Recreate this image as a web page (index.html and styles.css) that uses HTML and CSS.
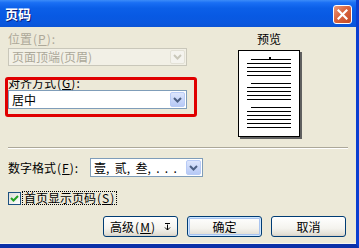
FILE: index.html
```html
<!DOCTYPE html>
<html lang="zh-CN">
<head>
    <meta charset="UTF-8">
    <title>页码</title>
    <link rel="stylesheet" href="styles.css">
</head>
<body>
    <div class="window">
        <div class="titlebar">
            <span class="title">页码</span>
            <span class="close">
                <svg width="11" height="11" viewBox="0 0 11 11"><path d="M1.5 1.5 L9.5 9.5 M9.5 1.5 L1.5 9.5" stroke="#fff" stroke-width="2.2" stroke-linecap="square"/></svg>
            </span>
        </div>
        <div class="content">
            <div class="top">
                <div class="settings">
                    <div class="label disabled">位置<span class="key">(<u>P</u>):</span></div>
                    <div class="combo is-disabled">
                        <span class="value">页面顶端(页眉)</span>
                        <span class="drop"><svg width="9" height="6" viewBox="0 0 9 6"><path d="M1 1 L4.5 4.5 L8 1" fill="none" stroke="currentColor" stroke-width="2"/></svg></span>
                    </div>
                    <div class="group">
                        <div class="label">对齐方式<span class="key">(<u>G</u>):</span></div>
                        <div class="combo tall">
                            <span class="value">居中</span>
                            <span class="drop"><svg width="9" height="6" viewBox="0 0 9 6"><path d="M1 1 L4.5 4.5 L8 1" fill="none" stroke="currentColor" stroke-width="2"/></svg></span>
                        </div>
                        <div class="mark"></div>
                    </div>
                </div>
                <div class="preview">
                    <div class="preview-title">预览</div>
                    <div class="page">
                        <svg width="60" height="85" viewBox="0 0 60 85" shape-rendering="crispEdges">
                            <rect x="30" y="6" width="2" height="2" fill="#000"/>
                            <g stroke="#000" stroke-width="1">
                                <path d="M12 8.5H52 M8 12.5H52 M8 16.5H52 M8 20.5H52 M8 24.5H52"/>
                                <path d="M12 32.5H52 M8 36.5H52 M8 40.5H52 M8 44.5H52 M8 48.5H52"/>
                                <path d="M12 56.5H52 M8 60.5H52 M8 64.5H52 M8 68.5H52 M8 72.5H52 M8 76.5H52"/>
                            </g>
                        </svg>
                    </div>
                </div>
            </div>
            <div class="separator"></div>
            <div class="format-row">
                <span class="label">数字格式<span class="key">(<u>F</u>):</span></span>
                <div class="combo tall format">
                    <span class="value numerals">壹,  贰,  叁,  .  .  .</span>
                    <span class="drop"><svg width="9" height="6" viewBox="0 0 9 6"><path d="M1 1 L4.5 4.5 L8 1" fill="none" stroke="currentColor" stroke-width="2"/></svg></span>
                </div>
            </div>
            <div class="check-row">
                <span class="checkbox">
                    <svg width="11" height="11" viewBox="0 0 11 11"><path d="M2 5 L4.5 7.5 L9 3" fill="none" stroke="#21a121" stroke-width="2"/></svg>
                </span>
                <span class="check-label">首页显示页码<span class="key">(<u>S</u>)</span></span>
            </div>
            <div class="buttons">
                <button class="btn">高级<span class="key">(<u>M</u>)</span>
                    <svg class="more" width="7" height="8" viewBox="0 0 7 8"><path d="M1 0.5H6 M3.5 1.5V7 M1 4.5L3.5 7L6 4.5" fill="none" stroke="#000" stroke-width="1"/></svg>
                </button>
                <button class="btn default">确定</button>
                <button class="btn">取消</button>
            </div>
        </div>
    </div>
</body>
</html>
```

FILE: styles.css
```css
body {
    margin: 0;
    padding: 0;
    width: 359px;
    height: 248px;
    overflow: hidden;
    font-family: "Noto Sans CJK SC", "DejaVu Sans", sans-serif;
    font-size: 12px;
    color: #000;
}
.window {
    width: 359px;
    height: 248px;
    box-sizing: border-box;
    display: flex;
    flex-direction: column;
    background: #0a5ae2;
    border-right: 3px solid #0b3ed0;
    border-bottom: 4px solid #0a30a8;
}
.titlebar {
    height: 27px;
    flex: none;
    display: flex;
    align-items: center;
    justify-content: space-between;
    padding: 0 4px 0 5px;
    background: linear-gradient(#3c8cf8 0%, #1a6ff4 10%, #0b5fe8 30%, #0859e3 60%, #0a58df 85%, #0b54d6 100%);
}
.title {
    color: #fff;
    font-weight: bold;
    font-size: 13px;
    line-height: 14px;
    margin-top: 1px;
    text-shadow: 1px 1px 0 #0a1e78;
}
.close {
    width: 19px;
    height: 19px;
    box-sizing: border-box;
    margin-top: 1px;
    border: 1px solid #fff;
    border-radius: 3px;
    background: linear-gradient(135deg, #e99a7c 0%, #d9643e 45%, #c44a25 100%);
    display: flex;
    align-items: center;
    justify-content: center;
}
.content {
    flex: 1;
    background: #ece9d8;
    display: flex;
    flex-direction: column;
    border-bottom: 1px solid #f7f6f0;
}
.top {
    display: flex;
    height: 112px;
}
.settings {
    width: 179px;
    padding: 5px 0 0 8px;
}
.label {
    line-height: 14px;
    white-space: nowrap;
}
.key {
    letter-spacing: 1px;
    margin-left: 1px;
}
.label u,
.check-label u,
.btn u {
    text-decoration: underline;
}
.disabled {
    color: #aca899;
}
.combo {
    height: 18px;
    margin-top: 2px;
    box-sizing: border-box;
    border: 1px solid #7f9db9;
    background: #fff;
    display: flex;
    align-items: center;
    justify-content: space-between;
    padding: 1px;
}
.combo.tall {
    height: 19px;
    margin-top: 0;
}
.combo .value {
    padding-left: 2px;
    line-height: 14px;
    white-space: nowrap;
}
.combo .numerals {
    white-space: pre;
}
.combo .drop {
    width: 15px;
    height: 100%;
    box-sizing: border-box;
    border: 1px solid #b8cbf6;
    border-radius: 2px;
    background: linear-gradient(#dde6fd, #b7c9f5);
    color: #4d6185;
    display: flex;
    align-items: center;
    justify-content: center;
}
.combo.is-disabled {
    border-color: #c9c7ba;
    background: #f2f0e6;
}
.combo.is-disabled .value {
    color: #aca899;
}
.combo.is-disabled .drop {
    border-color: #e3e1d6;
    background: #f4f3ee;
    color: #c9c7ba;
}
.group {
    position: relative;
    margin-top: 10px;
}
.mark {
    position: absolute;
    left: -3px;
    top: 1px;
    width: 192px;
    height: 40px;
    box-sizing: border-box;
    border: 3px solid #e00000;
    border-radius: 3px;
}
.preview {
    width: 62px;
    margin-left: 51px;
    padding-top: 5px;
    display: flex;
    flex-direction: column;
    align-items: center;
}
.preview-title {
    line-height: 14px;
}
.page {
    margin-top: 4px;
    width: 62px;
    height: 87px;
    box-sizing: border-box;
    border: 1px solid #000;
    background: #fff;
    box-shadow: 2px 2px 0 #606060;
}
.page svg {
    display: block;
}
.separator {
    margin: 8px 8px 0 8px;
    border-top: 1px solid #aca899;
    border-bottom: 1px solid #fff;
}
.format-row {
    display: flex;
    align-items: center;
    margin-top: 9px;
    padding-left: 8px;
}
.format-row .label {
    width: 82px;
}
.combo.format {
    width: 113px;
}
.check-row {
    display: flex;
    align-items: center;
    margin-top: 14px;
    padding-left: 8px;
}
.checkbox {
    width: 13px;
    height: 13px;
    box-sizing: border-box;
    border: 1px solid #1c5180;
    background: linear-gradient(135deg, #dcdcd7, #fff);
    display: flex;
    align-items: center;
    justify-content: center;
}
.check-label {
    margin-left: 1px;
    padding: 0 1px;
    line-height: 12px;
    border: 1px dotted #000;
}
.buttons {
    display: flex;
    justify-content: flex-end;
    gap: 9px;
    margin-top: 11px;
    padding-right: 10px;
}
.btn {
    width: 75px;
    height: 21px;
    padding: 0;
    font-family: inherit;
    font-size: 12px;
    line-height: 14px;
    color: #000;
    border: 1px solid #003c74;
    border-radius: 3px;
    background: linear-gradient(#ffffff 0%, #f4f3ee 60%, #e3e0d6 90%, #d6d0c5 100%);
    display: flex;
    align-items: center;
    justify-content: center;
}
.btn .more {
    margin-left: 8px;
}
.btn.default {
    box-shadow: inset 0 0 0 1px #cee7ff, inset 0 0 0 2px #a9c4f0;
}
```
